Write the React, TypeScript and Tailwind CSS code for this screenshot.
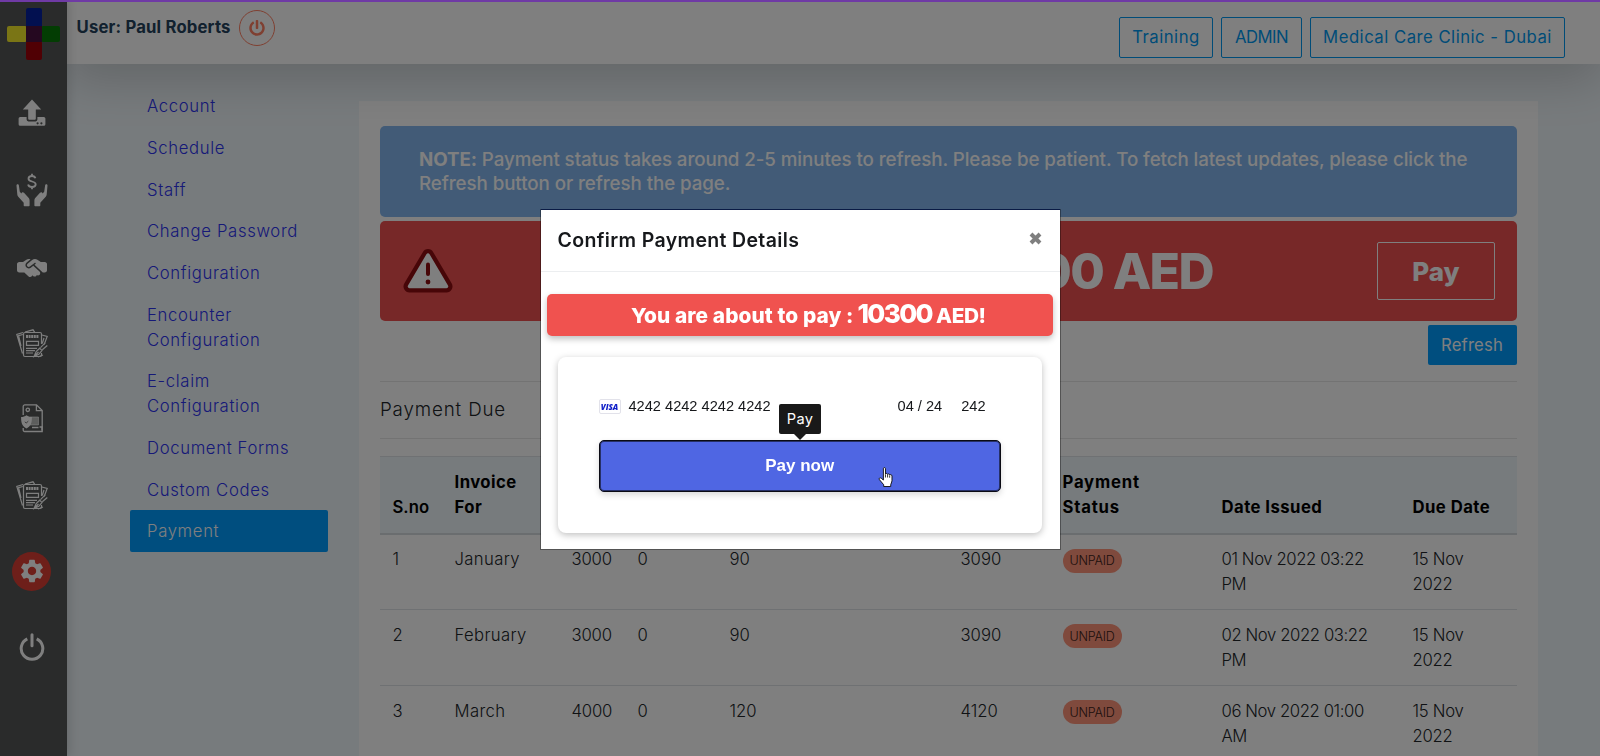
import React from 'react'
import { FaPowerOff } from 'react-icons/fa'
import { FaHandshakeSimple } from 'react-icons/fa6'
import { MdSettings } from 'react-icons/md'

const menuItems = [
  'Account',
  'Schedule',
  'Staff',
  'Change Password',
  'Configuration',
  'Encounter Configuration',
  'E-claim Configuration',
  'Document Forms',
  'Custom Codes',
  'Payment',
]

const invoices = [
  { id: 1, month: 'January', amount: 3000, discount: 0, vat: 90, total: 3090, issued: '01 Nov 2022 03:22 PM', due: '15 Nov 2022' },
  { id: 2, month: 'February', amount: 3000, discount: 0, vat: 90, total: 3090, issued: '02 Nov 2022 03:22 PM', due: '15 Nov 2022' },
  { id: 3, month: 'March', amount: 4000, discount: 0, vat: 120, total: 4120, issued: '06 Nov 2022 01:00 AM', due: '15 Nov 2022' },
]

const Logo: React.FC = () => (
  <svg width="54" height="54" viewBox="0 0 54 54">
    <rect x="0" y="18" width="20" height="16" rx="2" fill="#f4ea2a" />
    <rect x="34" y="18" width="19" height="16" rx="2" fill="#067a06" />
    <rect x="19" y="0" width="16" height="20" rx="2" fill="#0421a0" />
    <rect x="19" y="33" width="16" height="19" rx="2" fill="#a00008" />
    <rect x="19" y="18" width="16" height="16" fill="#4a1040" />
  </svg>
)

const UploadIcon: React.FC = () => (
  <svg width="28" height="28" viewBox="0 0 28 28" fill="currentColor">
    <path d="M14 0.5 23.2 10.6h-5.4v9.2a1 1 0 0 1-1 1h-5.6a1 1 0 0 1-1-1v-9.2H4.8z" />
    <path
      fillRule="evenodd"
      d="M2.2 18h6.4v2.6a1.8 1.8 0 0 0 1.8 1.8h7.2a1.8 1.8 0 0 0 1.8-1.8V18h6.4a1.6 1.6 0 0 1 1.6 1.6v5.6a1.6 1.6 0 0 1-1.6 1.6H2.2a1.6 1.6 0 0 1-1.6-1.6v-5.6A1.6 1.6 0 0 1 2.2 18zM19.6 23.2a1.1 1.1 0 1 0 0 2.2 1.1 1.1 0 0 0 0-2.2zM23.4 23.2a1.1 1.1 0 1 0 0 2.2 1.1 1.1 0 0 0 0-2.2z"
    />
  </svg>
)

const DonateIcon: React.FC = () => (
  <svg width="32" height="34" viewBox="0 0 32 34">
    <path
      d="M19.400 5.300C19 3.800 17.700 3 16 3c-2 0-3.500 1-3.500 2.700 0 3.800 7.200 1.800 7.200 5.600 0 1.700-1.600 2.700-3.700 2.700-2 0-3.500-.9-3.900-2.500M16 .8V3M16 14v2.300"
      fill="none"
      stroke="currentColor"
      strokeWidth="1.800"
    />
    <path
      id="hand"
      fill="currentColor"
      d="M.5 12.500c0-1.500 2.200-1.600 2.400 0l.9 6.200 1.600 1.900c.4-1.500 1.700-1.700 2.600-.8l4.300 4.600c1 1.100 1.300 2 1.300 3.400v4.700c0 .5-.3.8-.8.8H8.500c-.5 0-.8-.3-.8-.8v-2.800l-5.400-6c-.6-.7-.9-1.300-1-2.200z"
    />
    <use href="#hand" transform="matrix(-1 0 0 1 32 0)" />
  </svg>
)

const ClaimIcon: React.FC = () => (
  <svg width="32" height="29" viewBox="0 0 32 29" fill="none" stroke="currentColor" strokeWidth="1.200">
    <path d="M7.500 5V26a1.500 1.500 0 0 0 1.500 1.500h15a1.500 1.500 0 0 0 1.500-1.500v-2M25.500 15V5A1.500 1.500 0 0 0 24 3.500H9A1.500 1.500 0 0 0 7.500 5" />
    <path d="M6.500 24.500 .8 5.300 7 3.500M9 3 17 .8l1.600 2.400M5 17 2.600 6.700l4.200-1.200M25.800 6l5.400 1.500-3 8M28 9l-1.800 5.500" />
    <path d="M10 7.400h13" strokeWidth="3" strokeDasharray="2 .6" />
    <path d="M10.500 12.300h12v4h-12zM10 19.300h11M10 21.700h9M10 24h7" />
    <path d="M18 27.500l2.200-5 3.500-3.300 2.300 2.300-3.200 3.800zM24.500 18.600l4.700-4.800M26.300 20.800l5-4.300M18.500 27l4-4M22 28l5-2" />
  </svg>
)

const PolicyIcon: React.FC = () => (
  <svg width="24" height="29" viewBox="0 0 24 29" fill="none" stroke="currentColor" strokeWidth="1.300">
    <path d="M3.200 11V2.500A1.600 1.600 0 0 1 4.800.9h11.700l5.700 5.700V27.500H4.600a1.400 1.400 0 0 1-1.400-1.400V24M16.400 1v5.700h5.700" />
    <circle cx="7.800" cy="5.800" r="1.700" />
    <path d="M10 13h8.500v8H10z" fill="currentColor" fillOpacity=".6" strokeWidth=".6" />
    <path d="M12 23.500h6.500M19.500 23h2.500v3.500" />
    <path
      fill="currentColor"
      stroke="none"
      d="M6.500 11.200c1.600 1.300 3.200 1.700 5.400 1.800.1 5.500-.9 9.300-5.400 11.400C2 22.300 1 18.500 1.100 13c2.200-.1 3.800-.5 5.400-1.800z"
    />
    <path d="M4.800 17.800l1.400 1.200 2.100-1.800" stroke="#777" strokeWidth="1" />
  </svg>
)

const LogoutIcon: React.FC = () => (
  <svg width="26" height="28" viewBox="0 0 26 28" fill="none" stroke="currentColor" strokeWidth="3">
    <path d="M8.300 5.800a10.800 10.800 0 1 0 9.400 0" />
    <path d="M13 1.800v11" strokeLinecap="round" />
  </svg>
)

const WarningIcon: React.FC = () => (
  <svg width="50" height="44" viewBox="0 0 50 44">
    <path
      d="M21.600 4.200a3.900 3.900 0 0 1 6.800 0l18.400 31.200a3.900 3.900 0 0 1-3.400 5.900H6.600a3.900 3.900 0 0 1-3.400-5.900z"
      fill="#fff"
      stroke="#8e0c10"
      strokeWidth="4.200"
    />
    <path d="M25 15.500v9.500" stroke="#8e0c10" strokeWidth="4" strokeLinecap="round" />
    <circle cx="25" cy="33" r="2.400" fill="#8e0c10" />
  </svg>
)

const HandCursor: React.FC = () => (
  <svg className="absolute left-[279px] top-[27px]" width="16" height="21" viewBox="0 0 15 20">
    <path
      d="M5 1.600c0-1.400 2-1.400 2 0v5.200c.2-1 1.900-.9 2 .3.300-.8 1.900-.7 2 .5.500-.6 2.200-.4 2.200 1v4.600c0 1.500-1.200 2.600-1.200 3.700v1.700H5.300v-1.700L1.200 12c-.8-1.200.7-2.300 1.800-1.300l2 1.700z"
      fill="#fff"
      stroke="#111"
      strokeWidth=".9"
    />
    <path d="M7 7v3M9 7.300V10M11 8v2.200" stroke="#111" strokeWidth=".8" />
  </svg>
)

const Sidebar: React.FC = () => (
  <aside className="relative z-10 flex w-[67px] shrink-0 flex-col items-center bg-[#545756] pr-1 text-white shadow-[2px_0_10px_rgba(0,0,0,0.15)]">
    <div className="ml-1 flex h-[75px] items-start pt-2">
      <Logo />
    </div>
    <div className="flex h-[76px] items-center"><UploadIcon /></div>
    <div className="flex h-[77px] items-center"><DonateIcon /></div>
    <div className="flex h-[80px] items-center"><FaHandshakeSimple size={30} /></div>
    <div className="flex h-[70px] items-center"><ClaimIcon /></div>
    <div className="flex h-[80px] items-center"><PolicyIcon /></div>
    <div className="flex h-[74px] items-center"><ClaimIcon /></div>
    <div className="flex h-[78px] items-center">
      <div className="flex h-[39px] w-[39px] items-center justify-center rounded-full bg-[#dd3f34]">
        <MdSettings size={28} />
      </div>
    </div>
    <div className="flex h-[74px] items-center"><LogoutIcon /></div>
  </aside>
)

const Header: React.FC = () => (
  <header className="relative z-[5] flex h-16 shrink-0 justify-between bg-white pr-[35px] pl-[9.500px] shadow-[0_16px_48px_rgba(0,0,0,0.175)]">
    <div className="flex h-[55px] items-center gap-2">
      <span className="pt-px text-[16.700px] font-bold tracking-[0.180px] text-[#24425c]">User: Paul Roberts</span>
      <span className="flex h-9 w-9 items-center justify-center rounded-full border border-[#ff7f62] text-[#ff7f62]">
        <FaPowerOff size={16} />
      </span>
    </div>
    <div className="flex gap-2 pt-[17px] text-[16.700px] text-[#0098f0]">
      <span className="flex h-[41px] w-[94px] items-center justify-center rounded-xs border border-[#0098f0] pt-px font-normal tracking-[0.500px]">
        Training
      </span>
      <span className="flex h-[41px] w-[81px] items-center justify-center rounded-xs border border-[#0098f0] pt-px font-normal tracking-[-0.500px]">
        ADMIN
      </span>
      <span className="flex h-[41px] w-[255px] items-center justify-center rounded-xs border border-[#0098f0] pt-px font-normal tracking-[0.500px]">
        Medical Care Clinic - Dubai
      </span>
    </div>
  </header>
)

const SideMenu: React.FC = () => (
  <nav className="ml-[63px] w-[198px] shrink-0 pt-[21px] text-[16.700px] leading-[25px] tracking-[0.650px]">
    {menuItems.map(item => (
      <a
        key={item}
        className={
          item === 'Payment'
            ? 'block rounded-xs bg-[#009cff] pt-[9.330px] pr-6 pb-[7.330px] pl-[17px] text-white'
            : 'block pt-[9.330px] pr-6 pb-[7.330px] pl-[17px] text-[#2c33f0]'
        }
      >
        {item}
      </a>
    ))}
  </nav>
)

const InvoiceTable: React.FC = () => (
  <table className="mt-[17px] w-full table-fixed border-collapse text-left text-[16.700px] leading-[25px]">
    <colgroup>
      <col className="w-[62px]" />
      <col className="w-[117px]" />
      <col className="w-[66px]" />
      <col className="w-[92px]" />
      <col className="w-[231px]" />
      <col className="w-[102px]" />
      <col className="w-[159px]" />
      <col className="w-[191px]" />
      <col />
    </colgroup>
    <thead>
      <tr className="h-[77px] border-t border-b-2 border-t-[#dee2e6] border-b-[#d4dade] bg-[#eff6fa] align-bottom tracking-[0.450px] text-black">
        <th className="px-[12.500px] pb-[13px] font-semibold tracking-normal">S.no</th>
        <th className="px-[12.500px] pb-[13px]">Invoice<br />For</th>
        <th />
        <th />
        <th />
        <th />
        <th className="px-[12.500px] pb-[13px] tracking-[0.800px]">Payment<br />Status</th>
        <th className="px-[12.500px] pb-[13px]">Date Issued</th>
        <th className="px-[12.500px] pb-[13px]">Due Date</th>
      </tr>
    </thead>
    <tbody>
      {invoices.map(invoice => (
        <tr key={invoice.id} className="h-[76px] border-b border-[#dee2e6] align-top">
          <td className="px-[12.500px] pt-[12.500px]">{invoice.id}</td>
          <td className="px-[12.500px] pt-[12.500px] tracking-[0.350px]">{invoice.month}</td>
          <td className="px-[12.500px] pt-[12.500px] tracking-[-0.200px]">{invoice.amount}</td>
          <td className="px-[12.500px] pt-[12.500px]">{invoice.discount}</td>
          <td className="px-[12.500px] pt-[12.500px]">{invoice.vat}</td>
          <td className="px-[12.500px] pt-[12.500px]">{invoice.total}</td>
          <td className="px-[12.500px] pt-[14px]">
            <span className="flex h-6 w-[59px] items-center justify-center rounded-full bg-[#ff947a] text-[12.500px] tracking-[-0.200px] text-[#3a2018]">
              UNPAID
            </span>
          </td>
          <td className="px-[12.500px] pt-[12.500px] tracking-[-0.400px]">{invoice.issued}</td>
          <td className="px-[12.500px] pt-[12.500px] pr-8 tracking-[-0.300px]">{invoice.due}</td>
        </tr>
      ))}
    </tbody>
  </table>
)

const PaymentPanel: React.FC = () => (
  <main className="mt-[37px] ml-[31px] w-[1178.500px] bg-white px-[21px] pt-[25px]">
    <div className="h-[91px] rounded-[5px] bg-[#84b6ee] pt-[21.500px] pl-[39px] text-[18.750px] leading-6 font-medium tracking-[-0.080px] text-white">
      <b>NOTE:</b> Payment status takes around 2-5 minutes to refresh. Please be patient. To fetch latest updates, please click the
      <br />
      Refresh button or refresh the page.
    </div>
    <div className="mt-1 flex h-[100px] items-center rounded-[5px] bg-[#ee5050] pr-[21.500px] pl-[23px] text-white">
      <WarningIcon />
      <span className="w-[760px] text-right text-[50px] font-extrabold tracking-[-1.600px]">10300 AED</span>
      <span className="ml-auto flex h-[58px] w-[118px] items-center justify-center rounded-xs border border-white text-[26px] font-extrabold">
        Pay
      </span>
    </div>
    <div className="mt-1 flex justify-end">
      <span className="flex h-10 w-[89px] items-center justify-center rounded-xs bg-[#009cff] pt-px text-[16.700px] font-normal tracking-[0.150px] text-white">
        Refresh
      </span>
    </div>
    <h5 className="mt-4 flex h-[58px] items-center border-y border-[#e6e6e6] pt-px text-[18.750px] tracking-[0.850px]">Payment Due</h5>
    <InvoiceTable />
  </main>
)

const VisaBadge: React.FC = () => (
  <span className="flex h-[15px] w-[22px] items-center justify-center rounded-[2px] border border-[#e2e2ea] bg-white font-['Open_Sans',sans-serif] text-[8px] font-extrabold text-[#1020c8] italic">
    VISA
  </span>
)

const ConfirmModal: React.FC = () => (
  <div className="fixed top-[210px] left-[540.500px] z-30 h-[339px] w-[519.500px] bg-white text-[#16181b] shadow-[0_-1px_0_#0a1b45,0_0_0_1px_rgba(0,0,0,0.35)]">
    <div className="flex h-[62px] items-center justify-between border-b border-[#eceef0] pr-[18.500px] pl-[17px]">
      <h5 className="text-[19.500px] font-semibold tracking-[0.350px]">Confirm Payment Details</h5>
      <svg className="mb-1" width="13" height="13" viewBox="0 0 13 13">
        <path d="M2 2l9 9M11 2l-9 9" stroke="#7f7f7f" strokeWidth="4" />
      </svg>
    </div>
    <div className="mr-[7px] ml-[6px] mt-[22px] flex h-[42px] items-baseline justify-center rounded-[5px] bg-[#f0524f] pl-[17px] text-[20.800px] leading-[39px] font-extrabold whitespace-pre text-white shadow-[0_3px_6px_rgba(0,0,0,0.25)]">
      <span className="tracking-[0.100px]">You are about to pay </span>
      <span>:</span>
      <span className="ml-1 text-[26px] tracking-[-1.600px]">10300 </span>
      <span className="tracking-[-0.400px]">AED!</span>
    </div>
    <div className="mr-[18px] ml-[17px] mt-[21px] h-[176px] rounded-lg px-[41px] pt-[42px] shadow-[0_2px_7px_rgba(0,0,0,0.25)]">
      <div className="flex h-[15px] items-center font-['Liberation_Sans',sans-serif] text-[14.600px] font-normal">
        <VisaBadge />
        <span className="ml-2">4242 4242 4242 4242</span>
        <span className="ml-[127px]">04 / 24</span>
        <span className="ml-[19px]">242</span>
      </div>
      <div className="relative mt-[26px]">
        <button className="h-[52px] w-full rounded-[5px] border border-[#0b0b14] bg-[#4f66e3] font-['Liberation_Sans',sans-serif] text-[17px] font-bold text-white shadow-[0_3px_6px_rgba(0,0,0,0.15),inset_0_0_0_1px_rgba(11,11,20,0.6)]">
          Pay now
        </button>
        <div className="absolute -top-[36px] left-[180.500px] flex h-[30px] w-[42px] items-center justify-center rounded-[2px] bg-[#191919] pt-px text-[14.600px] font-normal tracking-[0.300px] text-white">
          Pay
          <svg className="absolute top-[30px] left-[15px]" width="12" height="6" viewBox="0 0 12 6">
            <path d="M0 0h12L6 6z" fill="#191919" />
          </svg>
        </div>
        <HandCursor />
      </div>
    </div>
  </div>
)

const App: React.FC = () => {
  return (
    <div className="relative flex h-[756px] w-[1600px] overflow-hidden bg-[#eff6fa] font-[Inter,sans-serif] font-light text-[#212529]">
      <Sidebar />
      <div className="flex flex-1 flex-col">
        <Header />
        <div className="flex">
          <SideMenu />
          <PaymentPanel />
        </div>
      </div>
      <div className="fixed inset-0 z-20 bg-black/50" />
      <div className="fixed inset-x-0 top-0 z-30 h-[2px] bg-[#6f3aa5]" />
      <ConfirmModal />
    </div>
  )
}

export default App
